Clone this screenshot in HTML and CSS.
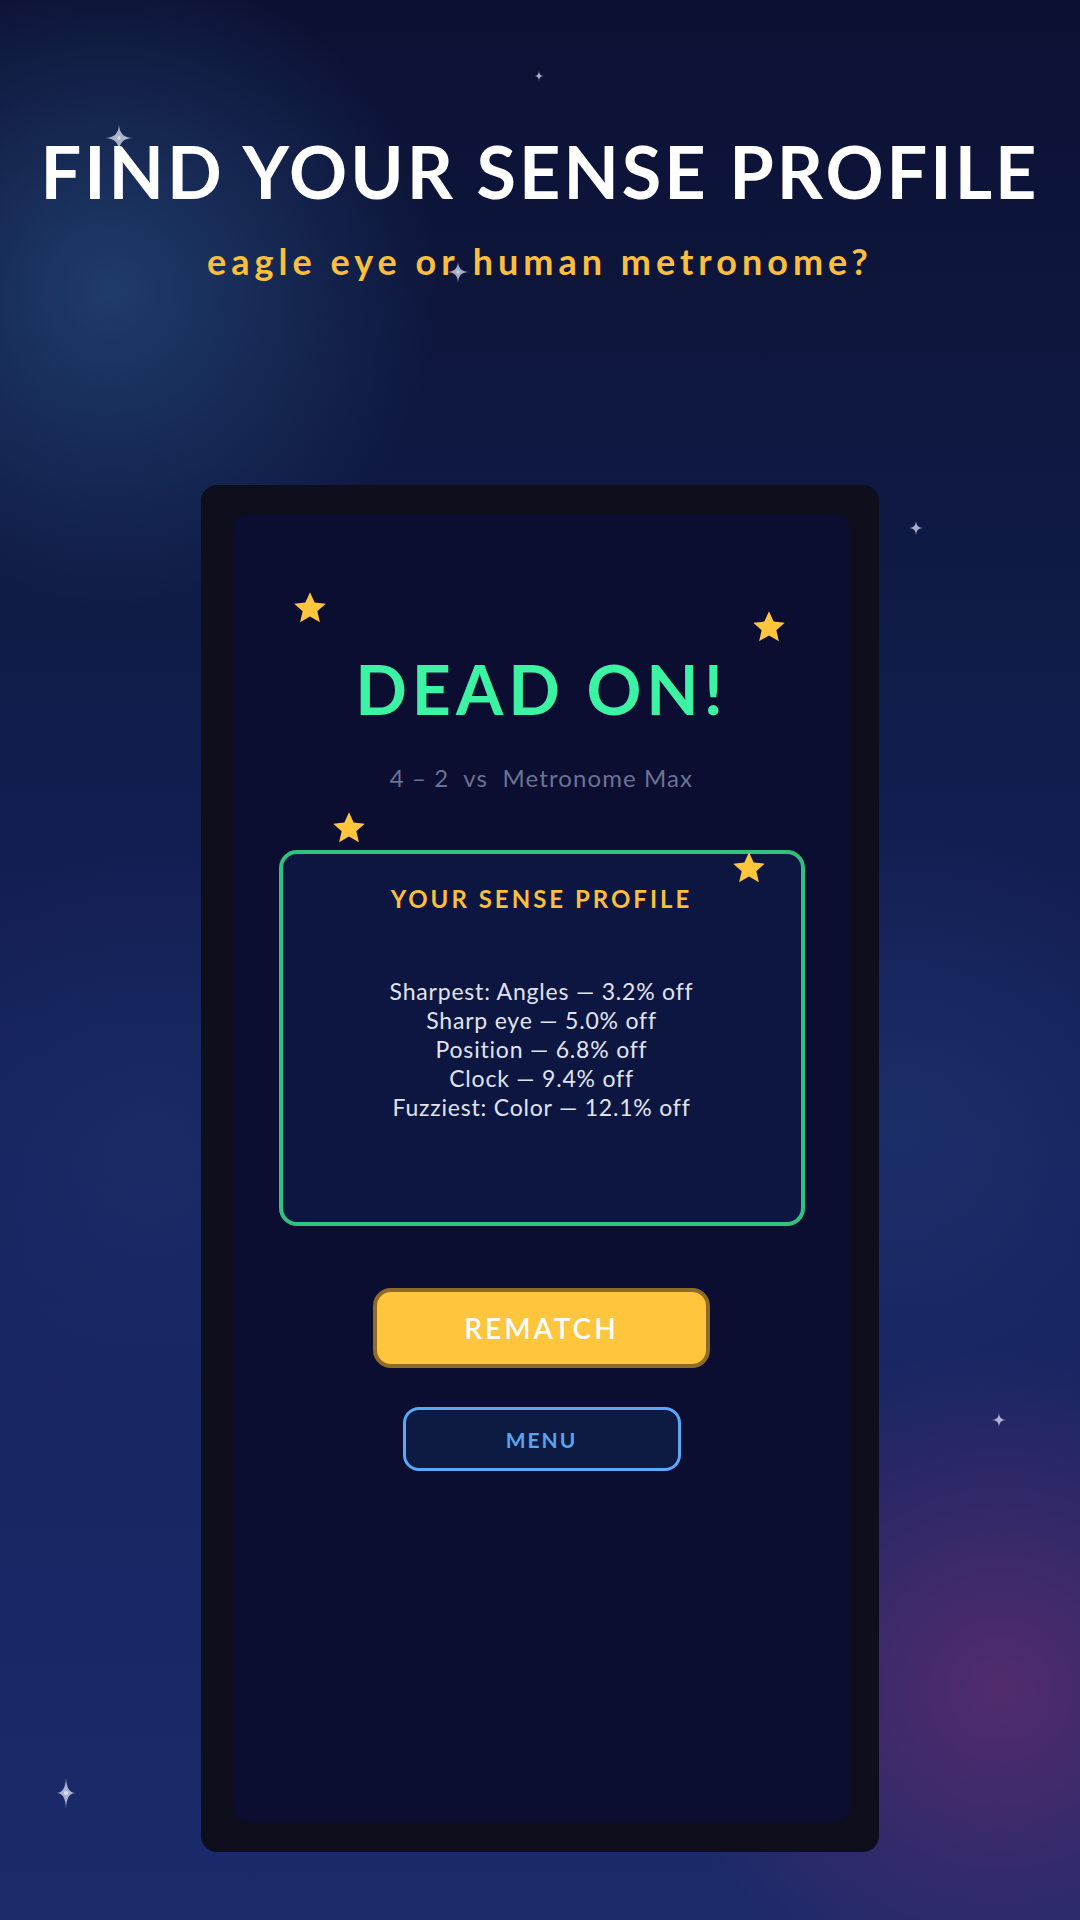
FILE: index.html
```html
<!DOCTYPE html>
<html lang="en">
<head>
<meta charset="utf-8">
<title>Find Your Sense Profile</title>
<link rel="stylesheet" href="styles.css">
</head>
<body>
<div class="sky">
  <svg class="sparkle s1" viewBox="-10 -10 20 20"><path d="M0 -10 Q0.15 -0.15 10 0 Q0.15 0.15 0 10 Q-0.15 0.15 -10 0 Q-0.15 -0.15 0 -10Z"/><circle r="1.2"/></svg>
  <svg class="sparkle s2" viewBox="-10 -10 20 20"><path d="M0 -10 Q0.3 -0.3 10 0 Q0.3 0.3 0 10 Q-0.3 0.3 -10 0 Q-0.3 -0.3 0 -10Z"/></svg>
  <svg class="sparkle s3" viewBox="-10 -10 20 20"><path d="M0 -10 Q0.15 -0.15 10 0 Q0.15 0.15 0 10 Q-0.15 0.15 -10 0 Q-0.15 -0.15 0 -10Z"/><circle r="1.2"/></svg>
  <svg class="sparkle s4" viewBox="-10 -10 20 20"><path d="M0 -10 Q0.3 -0.3 10 0 Q0.3 0.3 0 10 Q-0.3 0.3 -10 0 Q-0.3 -0.3 0 -10Z"/></svg>
  <svg class="sparkle s5" viewBox="-10 -10 20 20"><path d="M0 -10 Q0.3 -0.3 10 0 Q0.3 0.3 0 10 Q-0.3 0.3 -10 0 Q-0.3 -0.3 0 -10Z"/></svg>
  <svg class="sparkle s6" viewBox="-10 -10 20 20"><path d="M0 -10 Q0.15 -0.15 6 0 Q0.15 0.15 0 10 Q-0.15 0.15 -6 0 Q-0.15 -0.15 0 -10Z"/><circle r="1.3"/></svg>

  <header class="hero">
    <h1 class="hero-title">FIND YOUR SENSE PROFILE</h1>
    <p class="hero-sub">eagle eye or human metronome?</p>
  </header>

  <main class="device">
    <section class="screen">
      <svg class="star st1" viewBox="0 0 24 24"><path d="M12 1.5l3.1 6.9 7.4.7-5.6 5 1.7 7.4L12 17.6l-6.6 3.9 1.7-7.4-5.6-5 7.4-.7z"/></svg>
      <svg class="star st2" viewBox="0 0 24 24"><path d="M12 1.5l3.1 6.9 7.4.7-5.6 5 1.7 7.4L12 17.6l-6.6 3.9 1.7-7.4-5.6-5 7.4-.7z"/></svg>
      <svg class="star st3" viewBox="0 0 24 24"><path d="M12 1.5l3.1 6.9 7.4.7-5.6 5 1.7 7.4L12 17.6l-6.6 3.9 1.7-7.4-5.6-5 7.4-.7z"/></svg>
      <svg class="star st4" viewBox="0 0 24 24"><path d="M12 1.5l3.1 6.9 7.4.7-5.6 5 1.7 7.4L12 17.6l-6.6 3.9 1.7-7.4-5.6-5 7.4-.7z"/></svg>

      <h2 class="verdict">DEAD ON!</h2>
      <p class="score">4 – 2&nbsp; vs&nbsp; Metronome Max</p>

      <div class="profile">
        <h3 class="profile-title">YOUR SENSE PROFILE</h3>
        <ul class="profile-list">
          <li>Sharpest: Angles — 3.2% off</li>
          <li>Sharp eye — 5.0% off</li>
          <li>Position — 6.8% off</li>
          <li>Clock — 9.4% off</li>
          <li>Fuzziest: Color — 12.1% off</li>
        </ul>
      </div>

      <button class="btn btn-primary">REMATCH</button>
      <button class="btn btn-ghost">MENU</button>
    </section>
  </main>
</div>
</body>
</html>
```
FILE: styles.css
```css
* { box-sizing: border-box; }

html, body {
  margin: 0;
  padding: 0;
}

body {
  font-family: "Lato", "Noto Sans", sans-serif;
  color: #fff;
}

.sky {
  position: relative;
  width: 1080px;
  height: 1920px;
  overflow: hidden;
  display: flex;
  flex-direction: column;
  align-items: center;
  background:
    radial-gradient(circle 330px at 110px 290px, rgba(36, 72, 122, 0.75), rgba(36, 72, 122, 0) 100%),
    radial-gradient(circle 340px at 1000px 1690px, rgba(92, 44, 110, 0.85), rgba(92, 44, 110, 0) 100%),
    radial-gradient(circle 300px at 900px 1130px, rgba(34, 60, 118, 0.45), rgba(34, 60, 118, 0) 100%),
    radial-gradient(circle 300px at 150px 1150px, rgba(34, 60, 118, 0.3), rgba(34, 60, 118, 0) 100%),
    linear-gradient(180deg, #0c1133 0%, #0f1a45 30%, #16235f 60%, #1b2a6a 100%);
}

/* twinkles in the night sky */
.sparkle {
  position: absolute;
  fill: rgba(235, 240, 255, 0.7);
}
.s1 { left: 105px; top: 124px; width: 28px; height: 28px; }
.s2 { left: 534px; top: 71px; width: 10px; height: 10px; }
.s3 { left: 447px; top: 260px; width: 22px; height: 24px; }
.s4 { left: 909px; top: 521px; width: 14px; height: 14px; }
.s5 { left: 992px; top: 1413px; width: 14px; height: 14px; }
.s6 { left: 50px; top: 1775px; width: 32px; height: 36px; }

.hero {
  padding-top: 135px;
  text-align: center;
}

.hero-title {
  margin: 0;
  font-size: 72px;
  line-height: 72px;
  font-weight: 700;
  letter-spacing: 3px;
  color: #ffffff;
}

.hero-sub {
  margin: 34px 0 0;
  font-size: 36px;
  line-height: 40px;
  font-weight: 700;
  letter-spacing: 5px;
  color: #fbbf3b;
}

.device {
  margin-top: 204px;
  width: 678px;
  height: 1367px;
  padding: 29px 29px 30px 32px;
  background: #0e0e1c;
  border-radius: 16px;
}

.screen {
  position: relative;
  height: 100%;
  display: flex;
  flex-direction: column;
  align-items: center;
  padding-top: 141px;
  background: #0b0d31;
  border-radius: 16px;
}

.star {
  position: absolute;
  width: 36px;
  height: 36px;
  fill: #ffc53d;
}
.st1 { left: 59px; top: 76px; }
.st2 { left: 518px; top: 95px; }
.st3 { left: 98px; top: 296px; }
.st4 { left: 498px; top: 336px; }

.verdict {
  margin: 0;
  font-size: 68px;
  line-height: 68px;
  font-weight: 700;
  letter-spacing: 5px;
  color: #3cf2a3;
}

.score {
  margin: 40px 0 0;
  font-size: 24px;
  line-height: 30px;
  color: #6b7394;
  letter-spacing: 1.1px;
}

.profile {
  margin-top: 57px;
  width: 526px;
  height: 376px;
  padding-top: 30px;
  border: 4px solid #2ec27e;
  border-radius: 18px;
  background: #0d1640;
  text-align: center;
}

.profile-title {
  margin: 0;
  font-size: 24px;
  line-height: 30px;
  font-weight: 700;
  letter-spacing: 3px;
  color: #fbbf3b;
}

.profile-list {
  list-style: none;
  margin: 63px 0 0;
  padding: 0;
  font-size: 23px;
  line-height: 29px;
  letter-spacing: 0.8px;
  color: #e0e4f0;
}

.btn {
  font-family: inherit;
  cursor: pointer;
  text-align: center;
}

.btn-primary {
  margin-top: 62px;
  width: 337px;
  height: 80px;
  border: 4px solid #8e6b28;
  border-radius: 18px;
  background: #ffc53d;
  color: #ffffff;
  font-size: 28px;
  font-weight: 600;
  letter-spacing: 3px;
}

.btn-ghost {
  margin-top: 39px;
  width: 278px;
  height: 64px;
  border: 3px solid #5aa9f7;
  border-radius: 16px;
  background: #0d1a42;
  color: #5aa3ef;
  font-size: 21px;
  font-weight: 700;
  letter-spacing: 2px;
}
```
